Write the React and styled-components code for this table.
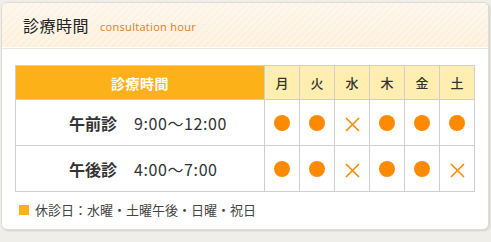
import React from 'react';
import styled, { createGlobalStyle } from 'styled-components';

const GlobalStyle = createGlobalStyle`
  html, body {
    margin: 0;
    background: #efeee9;
    font-family: "Noto Sans CJK JP", "Noto Sans", sans-serif;
  }
`;

const Page = styled.div`
  padding: 2px 2px 0 1px;
  height: 240px;
`;

const Card = styled.section`
  width: 488px;
  height: 228px;
  box-sizing: border-box;
  background: #fff;
  border: 1px solid #dedbd4;
  border-radius: 6px;
  box-shadow: 1px 1px 2px rgba(0, 0, 0, 0.12);
  overflow: hidden;
`;

const Header = styled.header`
  height: 44px;
  display: flex;
  align-items: center;
  gap: 11px;
  padding-left: 21px;
  background:
    repeating-linear-gradient(135deg, rgba(255, 255, 255, 0.3) 0 2px, rgba(255, 255, 255, 0) 2px 5px),
    linear-gradient(#fdf5ea, #fdefd9);
  border-bottom: 1px solid #fff;
  box-shadow: 0 1px 0 #ebe7e0;
`;

const Title = styled.h2`
  margin: 0;
  font-size: 16px;
  font-weight: 400;
  color: #222;
  letter-spacing: 0.5px;
`;

const Sub = styled.span`
  font-family: "Open Sans", "Noto Sans", sans-serif;
  font-size: 11px;
  letter-spacing: 0.3px;
  color: #e07d1c;
  padding-top: 2px;
`;

const Body = styled.div`
  padding: 17px 13px 0 13px;
`;

const Table = styled.table`
  width: 460px;
  border-collapse: collapse;
  table-layout: fixed;

  th, td {
    border: 1px solid #cfcfcf;
    padding: 0;
  }
`;

const MainHead = styled.th`
  height: 33px;
  background: #fdb119;
  color: #fff;
  font-size: 14px;
  font-weight: 700;
  letter-spacing: 0.5px;
`;

const DayHead = styled.th`
  width: 34px;
  background: #ffeeaf;
  color: #333;
  font-size: 13px;
  font-weight: 500;
`;

const Label = styled.td`
  height: 45px;
  padding-left: 53px !important;
  text-align: left;
  color: #333;
  font-size: 16px;
  white-space: pre;

  b {
    font-weight: 700;
    margin-right: 17px;
  }
`;

const Time = styled.span`
  letter-spacing: 0.6px;
`;

const Mark = styled.td`
  text-align: center;
  vertical-align: middle;
  line-height: 0;
`;

const Dot = styled.span`
  display: inline-block;
  width: 16px;
  height: 16px;
  border-radius: 50%;
  background: #ff8a00;
`;

const Legend = styled.p`
  margin: 8px 0 0 4px;
  display: flex;
  align-items: center;
  gap: 6px;
  font-size: 13px;
  color: #444;

  &::before {
    content: '';
    width: 10px;
    height: 10px;
    background: #fdb119;
  }
`;

function Cross() {
  return (
    <svg width="15" height="15" viewBox="0 0 15 15" style={{ marginTop: 3 }}>
      <path d="M1 1L14 14M14 1L1 14" stroke="#ff8a00" strokeWidth="1.6" fill="none" />
    </svg>
  );
}

const days = ['月', '火', '水', '木', '金', '土'];

const rows = [
  { label: '午前診', time: '9:00〜12:00', open: [1, 1, 0, 1, 1, 1] },
  { label: '午後診', time: '4:00〜7:00', open: [1, 1, 0, 1, 1, 0] },
];

export default function App() {
  return (
    <Page>
      <GlobalStyle />
      <Card>
        <Header>
          <Title>診療時間</Title>
          <Sub>consultation hour</Sub>
        </Header>
        <Body>
          <Table>
            <thead>
              <tr>
                <MainHead>診療時間</MainHead>
                {days.map(d => <DayHead key={d}>{d}</DayHead>)}
              </tr>
            </thead>
            <tbody>
              {rows.map(r => (
                <tr key={r.label}>
                  <Label><b>{r.label}</b><Time>{r.time}</Time></Label>
                  {r.open.map((o, i) => (
                    <Mark key={i}>{o ? <Dot /> : <Cross />}</Mark>
                  ))}
                </tr>
              ))}
            </tbody>
          </Table>
          <Legend>休診日：水曜・土曜午後・日曜・祝日</Legend>
        </Body>
      </Card>
    </Page>
  );
}
